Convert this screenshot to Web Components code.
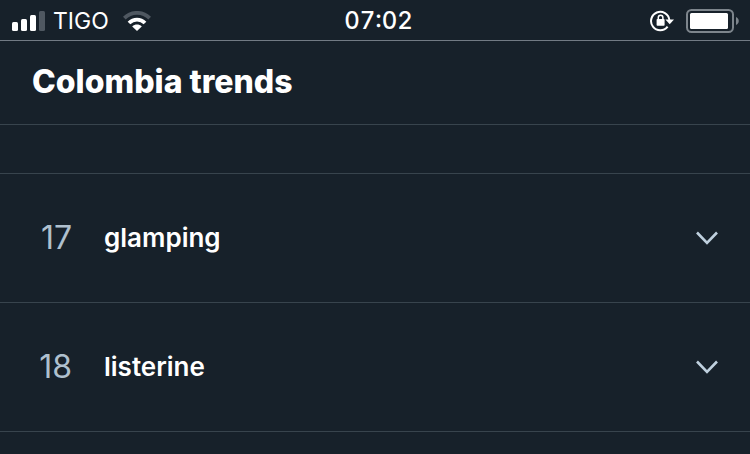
<!DOCTYPE html>
<html lang="en">
<head>
<meta charset="utf-8">
<meta name="viewport" content="width=device-width">
<title>Colombia trends</title>
<style>
  body { margin: 0; min-height: 100vh; background: #17212a; color: #fff; font-family: Inter, "Liberation Sans", sans-serif; }
</style>
</head>
<body>
<trends-page>
  <phone-status slot="status"><span slot="carrier">TIGO</span><span slot="time">07:02</span></phone-status>
  <page-header slot="header">Colombia trends</page-header>
  <trend-row rank="17">glamping</trend-row>
  <trend-row rank="18">listerine</trend-row>
</trends-page>
<script>
class Base extends HTMLElement {
  constructor() {
    super();
    this.attachShadow({ mode: 'open' }).innerHTML = this.constructor.markup;
  }
}

customElements.define('trends-page', class extends Base {
  static markup = `
    <style>
      :host { display: block; }
      main { border-top: 1px solid #38444d; margin-top: 48px; }
    </style>
    <slot name="status"></slot>
    <slot name="header"></slot>
    <main><slot></slot></main>`;
});

customElements.define('phone-status', class extends Base {
  static markup = `
    <style>
      :host { display: grid; grid-template-columns: 1fr auto 1fr; align-items: center; height: 40px;
        padding: 0 11px 0 12px; border-bottom: 1px solid #727b84; line-height: 42px; }
      div { display: flex; align-items: center; }
      svg { display: block; }
      .left { gap: 8px; font-size: 23px; }
      .wifi { margin-left: 6px; }
      .time { font-weight: 500; font-size: 24px; margin-left: 6px; font-feature-settings: "tnum", "case"; }
      .right { justify-content: flex-end; gap: 12px; }
    </style>
    <div class="left">
      <svg width="33" height="20" viewBox="0 0 33 20" fill="#fff" role="img" aria-label="Signal">
        <rect x="0" y="11" width="6" height="9" rx="1.5"/><rect x="9" y="8" width="6" height="12" rx="1.5"/>
        <rect x="18" y="4" width="6" height="16" rx="1.5"/><rect x="27" y="0" width="6" height="20" rx="1.5" fill="#4f5861"/>
      </svg>
      <slot name="carrier"></slot>
      <svg class="wifi" width="28" height="20" viewBox="0 0 28 20" fill="none" stroke-width="3.8" role="img" aria-label="Wi-Fi">
        <path d="M1.3 7.1C8.2 .1 19.8 .1 26.7 7.1" stroke="#4f5861"/>
        <path d="M6 12C10.5 7.5 17.5 7.5 22 12" stroke="#fff"/>
        <path d="M9.2 15.4C12 12.8 16 12.8 18.8 15.4L14 20Z" fill="#fff"/>
      </svg>
    </div>
    <div class="time"><slot name="time"></slot></div>
    <div class="right">
      <svg width="24" height="22" viewBox="0 0 24 22" fill="none" role="img" aria-label="Rotation lock">
        <path d="M17.6 16.6A9.2 9.2 0 1 1 19.4 10" stroke="#fff" stroke-width="2"/>
        <path d="M15.4 9.6H24L19.7 14.2Z" fill="#fff"/>
        <rect x="6.6" y="9" width="8" height="6.8" rx=".8" fill="#fff"/>
        <path d="M8.3 9.8V7.6a2.3 2.3 0 0 1 4.6 0v2.2" stroke="#fff" stroke-width="1.5"/>
      </svg>
      <svg width="53" height="24" viewBox="0 0 53 24" role="img" aria-label="Battery">
        <rect x="1" y="1" width="46" height="22" rx="4.5" fill="none" stroke="#7d858c" stroke-width="2"/>
        <rect x="4" y="4" width="38" height="16" rx="1.5" fill="#fff"/>
        <path d="M50 8C53.7 9.4 53.7 14.6 50 16Z" fill="#7d858c"/>
      </svg>
    </div>`;
});

customElements.define('page-header', class extends Base {
  static markup = `
    <style>
      :host { display: block; padding: 21px 32px 22px; border-bottom: 1px solid #38444d; }
      h1 { margin: 0; font-size: 32px; line-height: 40px; font-weight: 850; }
    </style>
    <h1><slot></slot></h1>`;
});

customElements.define('trend-row', class extends Base {
  static markup = `
    <style>
      :host { display: flex; align-items: center; padding: 40px 32px; border-bottom: 1px solid #38444d; }
      .rank { width: 40px; text-align: right; color: #afc0ce; font-size: 32px; line-height: 48px; font-weight: 400; }
      .name { flex: 1; margin-left: 32px; font-size: 26px; line-height: 48px; font-weight: 600; }
      button { all: unset; display: block; padding: 12px 0; cursor: pointer; }
      button:focus-visible { outline: 2px solid #b5c6d5; }
      svg { display: block; }
    </style>
    <span class="rank"></span>
    <span class="name"><slot></slot></span>
    <button type="button" aria-label="More options">
      <svg width="22" height="14" viewBox="0 0 22 14" fill="none" stroke="#bfd0de" stroke-width="2.6">
        <path d="M1 1.5L11 11.8L21 1.5"/>
      </svg>
    </button>`;
  connectedCallback() {
    this.shadowRoot.querySelector('.rank').textContent = this.getAttribute('rank');
  }
});
</script>
</body>
</html>
